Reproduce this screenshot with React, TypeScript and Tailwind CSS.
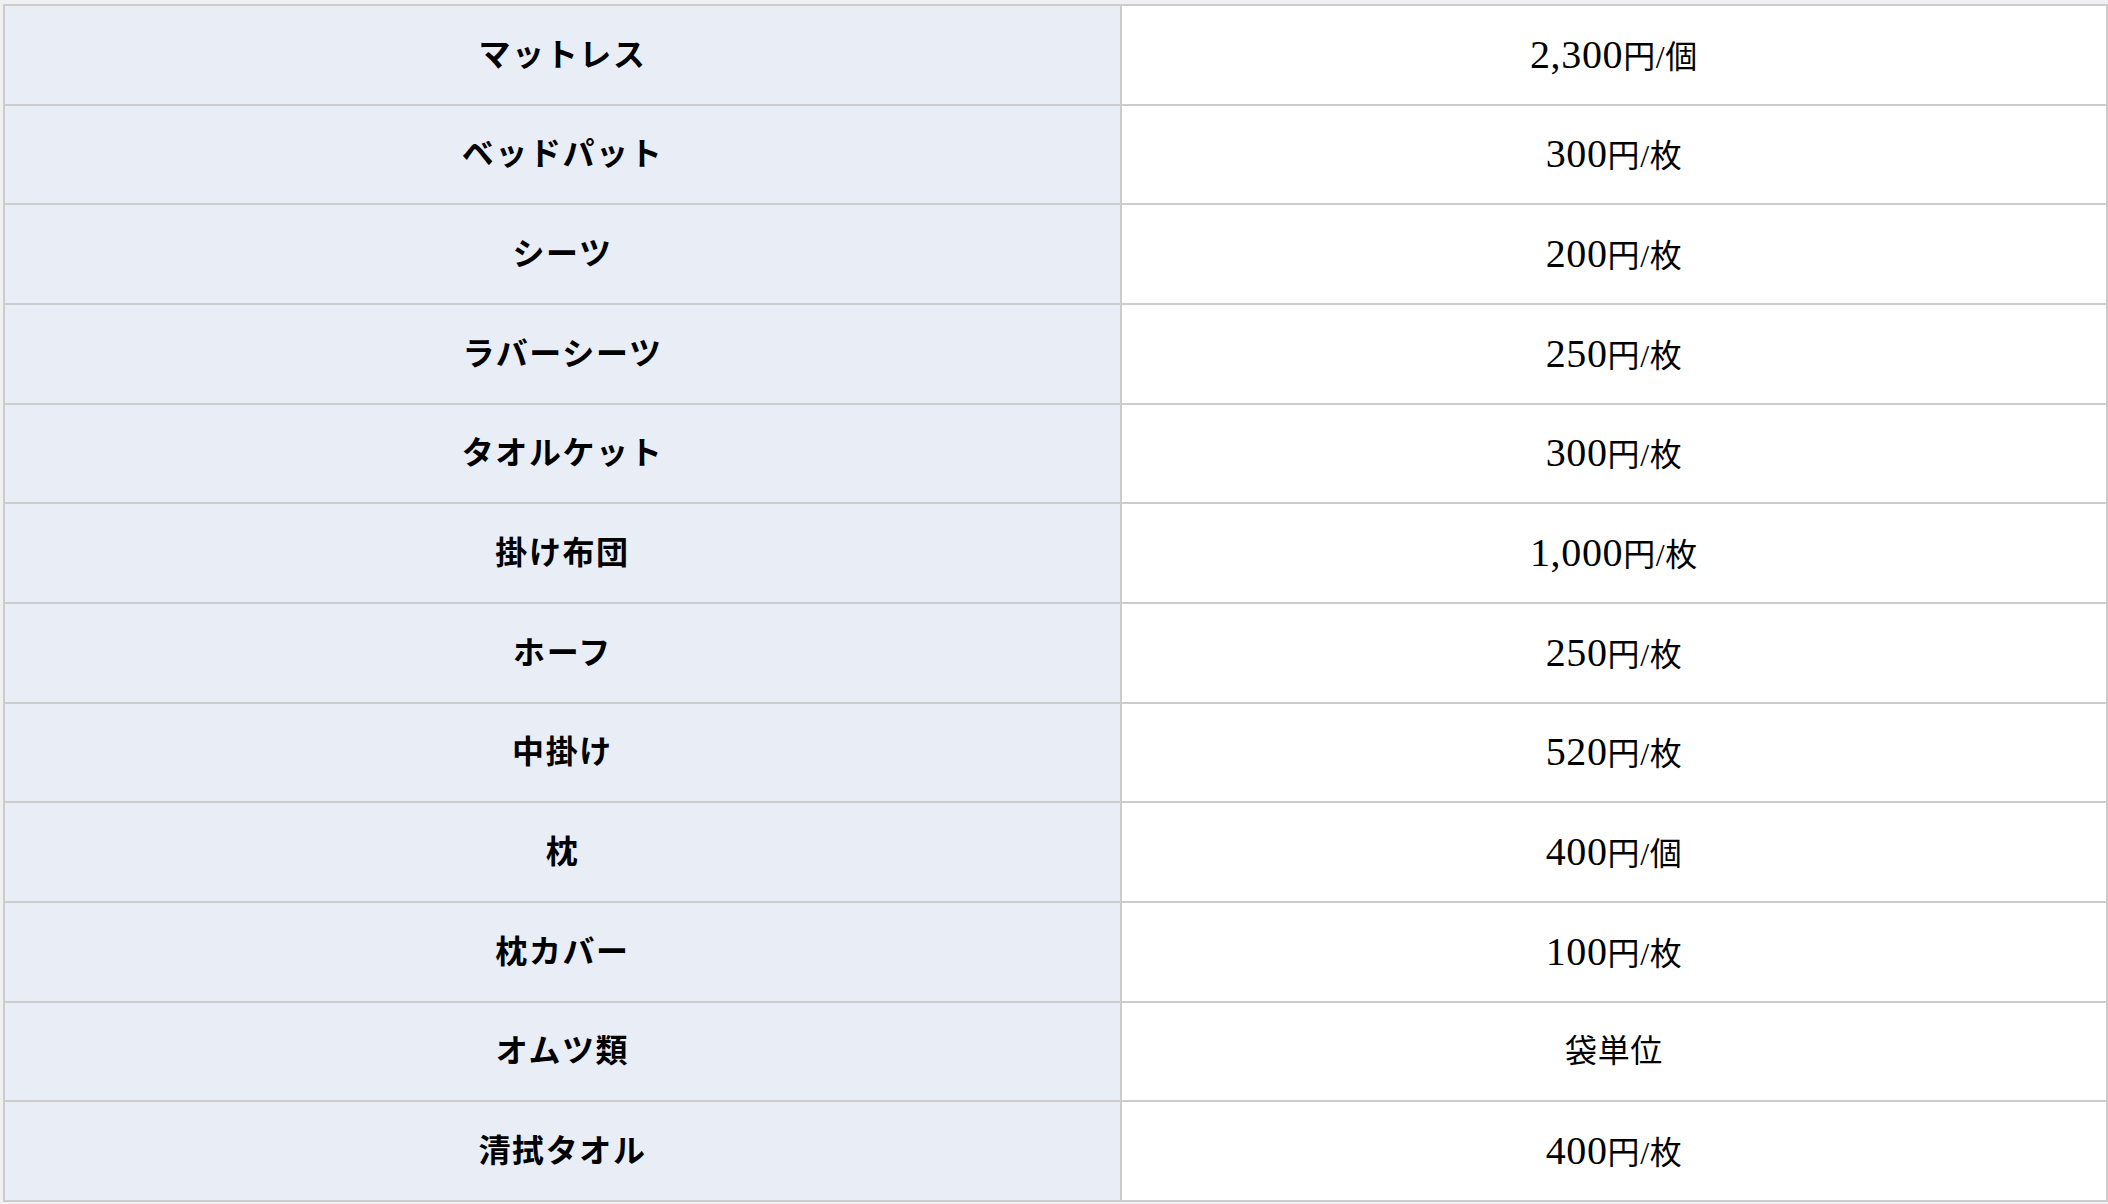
import React from "react";

const rows: { name: string; num: string; unit: string }[] = [
  { name: "マットレス", num: "2,300", unit: "円/個" },
  { name: "ベッドパット", num: "300", unit: "円/枚" },
  { name: "シーツ", num: "200", unit: "円/枚" },
  { name: "ラバーシーツ", num: "250", unit: "円/枚" },
  { name: "タオルケット", num: "300", unit: "円/枚" },
  { name: "掛け布団", num: "1,000", unit: "円/枚" },
  { name: "ホーフ", num: "250", unit: "円/枚" },
  { name: "中掛け", num: "520", unit: "円/枚" },
  { name: "枕", num: "400", unit: "円/個" },
  { name: "枕カバー", num: "100", unit: "円/枚" },
  { name: "オムツ類", num: "", unit: "袋単位" },
  { name: "清拭タオル", num: "400", unit: "円/枚" },
];

export default function App() {
  return (
    <div className="min-h-screen w-full bg-[#f0f0f2] pt-[4px] pl-[3px] font-['Liberation_Serif','Noto_Sans_CJK_JP',serif] text-black">
      <table className="w-[2103px] table-fixed border-collapse border-2 border-[#cccccc]">
        <colgroup>
          <col className="w-[1117px]" />
          <col className="w-[986px]" />
        </colgroup>
        <tbody>
          {rows.map((r) => (
            <tr key={r.name} className="h-[99.67px]">
              <th className="border-2 border-[#cccccc] bg-[#e9eef6] p-0 text-center align-middle text-[32px] font-bold leading-none tracking-[0.05em]">
                {r.name}
              </th>
              <td className="border-2 border-[#cccccc] bg-white p-0 text-center align-middle text-[32px] font-normal leading-none tracking-[0.02em]">
                {r.num && <span className="text-[40px]">{r.num}</span>}
                <span>{r.unit}</span>
              </td>
            </tr>
          ))}
        </tbody>
      </table>
    </div>
  );
}
